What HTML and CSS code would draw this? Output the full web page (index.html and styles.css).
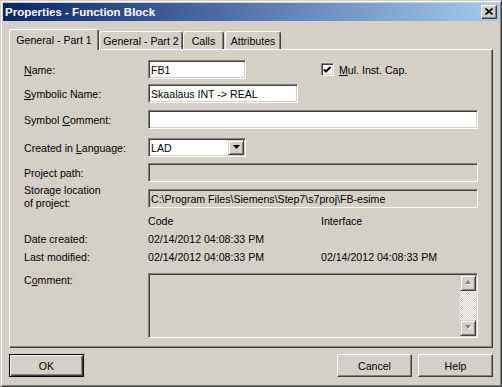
FILE: index.html
```html
<!DOCTYPE html>
<html>
<head>
<meta charset="utf-8">
<title>Properties - Function Block</title>
<link rel="stylesheet" href="styles.css">
</head>
<body>
<div class="window">
  <div class="titlebar">
    <span class="title">Properties - Function Block</span>
    <div class="close">
      <svg width="8" height="7" viewBox="0 0 8 7"><path d="M0.5 0.5 L7.5 6.5 M7.5 0.5 L0.5 6.5" stroke="#000" stroke-width="1.6" fill="none"/></svg>
    </div>
  </div>
  <div class="body">
    <div class="tabs">
      <div class="tab active">General - Part 1</div>
      <div class="tab t2">General - Part 2</div>
      <div class="tab t3">Calls</div>
      <div class="tab t4">Attributes</div>
    </div>
    <div class="panel">
      <div class="row r1">
        <div class="lbl"><u>N</u>ame:</div>
        <div class="field w98">FB1</div>
        <div class="check">
          <svg width="9" height="9" viewBox="0 0 9 9"><path d="M1 3.5 L3 5.5 L7.5 1" stroke="#000" stroke-width="2" fill="none"/></svg>
        </div>
        <div class="checklbl"><u>M</u>ul. Inst. Cap.</div>
      </div>
      <div class="row r2">
        <div class="lbl"><u>S</u>ymbolic Name:</div>
        <div class="field w150">Skaalaus INT -&gt; REAL</div>
      </div>
      <div class="row r3">
        <div class="lbl">Symbol <u>C</u>omment:</div>
        <div class="field w330"></div>
      </div>
      <div class="row r4">
        <div class="lbl">Created in <u>L</u>anguage:</div>
        <div class="field combo w98">
          <span class="combotext">LAD</span>
          <span class="drop"><svg width="7" height="4" viewBox="0 0 7 4"><path d="M0 0 H7 L3.5 4 Z" fill="#000"/></svg></span>
        </div>
      </div>
      <div class="row r5">
        <div class="lbl">Project path:</div>
        <div class="field disabled w330"></div>
      </div>
      <div class="row r6">
        <div class="lbl two">Storage location<br>of project:</div>
        <div class="field disabled w330">C:\Program Files\Siemens\Step7\s7proj\FB-esime</div>
      </div>
      <div class="info r7">
        <div class="lbl"></div>
        <div class="col">Code</div>
        <div class="col2">Interface</div>
      </div>
      <div class="info">
        <div class="lbl">Date created:</div>
        <div class="col">02/14/2012 04:08:33 PM</div>
        <div class="col2"></div>
      </div>
      <div class="info">
        <div class="lbl">Last modified:</div>
        <div class="col">02/14/2012 04:08:33 PM</div>
        <div class="col2">02/14/2012 04:08:33 PM</div>
      </div>
      <div class="row r10">
        <div class="lbl clbl">C<u>o</u>mment:</div>
        <div class="commentbox">
          <div class="scrollbar">
            <div class="sbtn"><svg width="9" height="6" viewBox="0 0 9 6"><path d="M4 0 L7 4 H1 Z" fill="#fff" transform="translate(1 1)"/><path d="M4 0 L7 4 H1 Z" fill="#808080"/></svg></div>
            <div class="track"></div>
            <div class="sbtn"><svg width="9" height="6" viewBox="0 0 9 6"><path d="M1 0 H7 L4 4 Z" fill="#fff" transform="translate(1 1)"/><path d="M1 0 H7 L4 4 Z" fill="#808080"/></svg></div>
          </div>
        </div>
      </div>
    </div>
    <div class="footer">
      <div class="btn default">OK</div>
      <div class="btn cancel">Cancel</div>
      <div class="btn">Help</div>
    </div>
  </div>
</div>
</body>
</html>
```

FILE: styles.css
```css
html, body {
  margin: 0;
  padding: 0;
}
body {
  font-family: "Liberation Sans", Arial, sans-serif;
  font-size: 10.6px;
  color: #000;
  background: #D4D0C8;
}
u {
  text-decoration: underline;
  text-underline-offset: 1px;
}
.window {
  box-sizing: border-box;
  width: 502px;
  height: 387px;
  background: #D4D0C8;
  border: 1px solid;
  border-color: #D4D0C8 #404040 #404040 #D4D0C8;
  box-shadow: inset 1px 1px #fff, inset -1px -1px #808080;
  padding: 2px;
  display: flex;
  flex-direction: column;
}
.titlebar {
  height: 18px;
  display: flex;
  align-items: center;
  padding: 0 2px 0 2px;
  background: linear-gradient(to right, #0A246A, #A6CAF0);
}
.title {
  flex: 1;
  color: #fff;
  font-weight: bold;
  font-size: 11.5px;
  white-space: nowrap;
}
.close {
  box-sizing: border-box;
  width: 16px;
  height: 14px;
  background: #D4D0C8;
  border: 1px solid;
  border-color: #fff #404040 #404040 #fff;
  box-shadow: inset -1px -1px #808080;
  display: flex;
  align-items: center;
  justify-content: center;
  padding-bottom: 1px;
}
.close svg {
  display: block;
}
.body {
  display: flex;
  flex-direction: column;
  padding: 8px 0 0 6px;
}
.tabs {
  display: flex;
  align-items: flex-end;
  height: 20px;
}
.tab {
  box-sizing: border-box;
  height: 18px;
  border-top: 1px solid #fff;
  border-left: 1px solid #fff;
  border-right: 1px solid #404040;
  box-shadow: inset -1px 0 #808080;
  border-radius: 3px 3px 0 0;
  display: flex;
  align-items: center;
  justify-content: center;
  padding-top: 1px;
  white-space: nowrap;
  background: #D4D0C8;
}
.tab.active {
  width: 90px;
  height: 21px;
  margin-bottom: -1px;
  position: relative;
  z-index: 1;
  padding-bottom: 2px;
}
.tab.t2 { width: 84px; }
.tab.t3 { width: 41px; }
.tab.t4 { width: 56px; margin-left: 1px; }
.panel {
  box-sizing: border-box;
  width: 484px;
  height: 299px;
  border: 1px solid;
  border-color: #fff #404040 #404040 #fff;
  box-shadow: inset -1px -1px #808080;
  padding: 10px 0 0 14px;
  display: flex;
  flex-direction: column;
}
.row {
  display: flex;
  align-items: center;
  height: 19px;
}
.r2 { margin-top: 5px; }
.r3 { margin-top: 7px; }
.r4 { margin-top: 9px; }
.r5 { margin-top: 6px; }
.r6 { margin-top: 7px; align-items: flex-start; }
.lbl {
  width: 124px;
  flex: none;
  white-space: nowrap;
}
.two {
  line-height: 13px;
  margin-top: -5px;
}
.field {
  box-sizing: border-box;
  height: 19px;
  background: #fff;
  border: 1px solid;
  border-color: #808080 #fff #fff #808080;
  box-shadow: inset 1px 1px #404040, inset -1px -1px #D4D0C8;
  padding: 1px 2px 0 2px;
  display: flex;
  align-items: center;
  white-space: nowrap;
}
.field.disabled {
  background: #D4D0C8;
}
.w98 { width: 98px; }
.w150 { width: 150px; }
.w330 { width: 330px; }
.combo {
  padding: 1px 1px 1px 2px;
}
.combotext {
  flex: 1;
  padding-top: 1px;
}
.drop {
  box-sizing: border-box;
  width: 16px;
  height: 15px;
  margin-top: -1px;
  background: #D4D0C8;
  border: 1px solid;
  border-color: #D4D0C8 #404040 #404040 #D4D0C8;
  box-shadow: inset 1px 1px #fff, inset -1px -1px #808080;
  display: flex;
  align-items: center;
  justify-content: center;
}
.drop svg { display: block; }
.check {
  box-sizing: border-box;
  width: 13px;
  height: 13px;
  margin-left: 75px;
  background: #fff;
  border: 1px solid;
  border-color: #808080 #fff #fff #808080;
  box-shadow: inset 1px 1px #404040, inset -1px -1px #D4D0C8;
  padding: 1px;
  display: flex;
  align-items: center;
  justify-content: center;
}
.check svg { display: block; margin: 1px 0 0 0; }
.checklbl {
  margin-left: 5px;
  white-space: nowrap;
}
.info {
  display: flex;
  height: 18px;
  align-items: center;
  white-space: nowrap;
}
.r7 { margin-top: 4px; }
.col { width: 173px; }
.r10 {
  margin-top: 7px;
  align-items: flex-start;
  height: 65px;
}
.clbl {
  margin-top: 1px;
  line-height: 13px;
}
.commentbox {
  box-sizing: border-box;
  width: 330px;
  height: 65px;
  background: #D4D0C8;
  border: 1px solid;
  border-color: #808080 #fff #fff #808080;
  box-shadow: inset 1px 1px #404040, inset -1px -1px #D4D0C8;
  padding: 1px;
  display: flex;
  justify-content: flex-end;
}
.scrollbar {
  width: 16px;
  display: flex;
  flex-direction: column;
}
.sbtn {
  box-sizing: border-box;
  width: 16px;
  height: 16px;
  background: #D4D0C8;
  border: 1px solid;
  border-color: #D4D0C8 #404040 #404040 #D4D0C8;
  box-shadow: inset 1px 1px #fff, inset -1px -1px #808080;
  display: flex;
  align-items: center;
  justify-content: center;
}
.sbtn svg { display: block; }
.track {
  flex: 1;
  background-color: #D4D0C8;
  background-image: conic-gradient(#fff 25%, #D4D0C8 0 50%, #fff 0 75%, #D4D0C8 0);
  background-size: 2px 2px;
}
.footer {
  display: flex;
  width: 484px;
  margin-top: 6px;
  gap: 6px;
}
.btn {
  box-sizing: border-box;
  width: 75px;
  height: 23px;
  background: #D4D0C8;
  border: 1px solid;
  border-color: #fff #404040 #404040 #fff;
  box-shadow: inset -1px -1px #808080;
  display: flex;
  align-items: center;
  justify-content: center;
}
.btn.default {
  border-color: #000;
  box-shadow: inset 1px 1px #fff, inset -1px -1px #404040, inset -2px -2px #808080;
}
.cancel {
  margin-left: auto;
}
```
